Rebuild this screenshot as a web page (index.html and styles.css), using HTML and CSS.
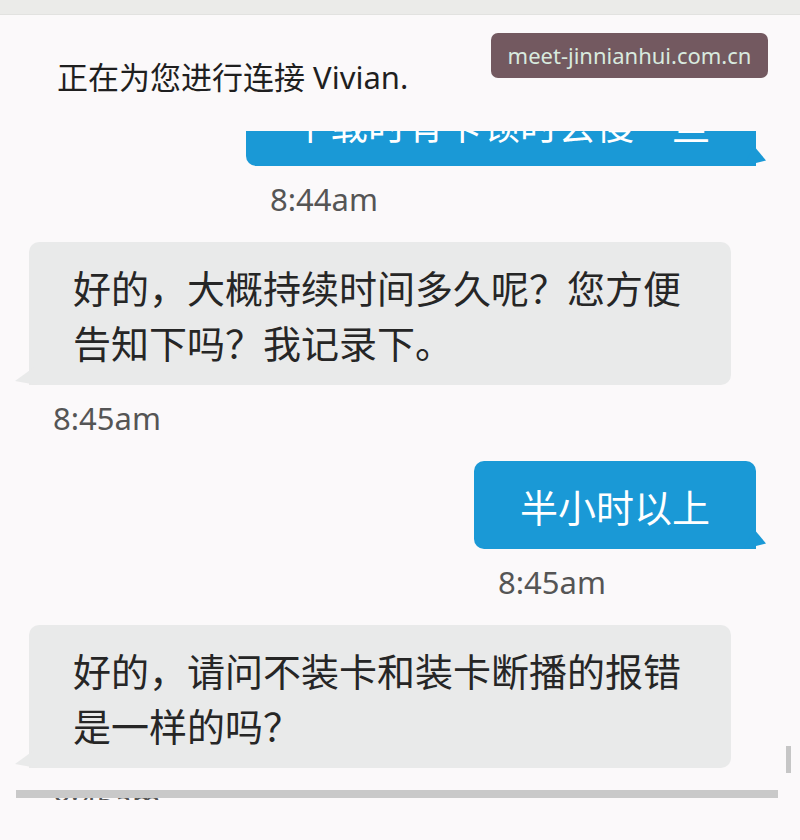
FILE: index.html
```html
<!DOCTYPE html>
<html lang="zh-CN">
  <head>
    <title>在线客服</title>
    <meta charset="UTF-8">
    <link rel="stylesheet" href="styles.css">
  </head>
  <body>
    <div class="topbar"></div>

    <header class="status">
      <p>正在为您进行连接 Vivian.</p>
      <span class="watermark">meet-jinnianhui.com.cn</span>
    </header>

    <main class="chat">
      <div class="messages">
        <div class="msg out first">
          <div class="bubble">下载时有卡顿时会慢一些</div>
          <div class="time">8:44am</div>
        </div>

        <div class="msg in">
          <div class="bubble">好的，大概持续时间多久呢？您方便告知下吗？我记录下。</div>
          <div class="time">8:45am</div>
        </div>

        <div class="msg out">
          <div class="bubble">半小时以上</div>
          <div class="time">8:45am</div>
        </div>

        <div class="msg in">
          <div class="bubble">好的，请问不装卡和装卡断播的报错是一样的吗？</div>
          <div class="time">8:45am</div>
        </div>
      </div>

      <!-- scrollbars drawn over the list -->
      <div class="vscroll"></div>
      <div class="hscroll"></div>
    </main>
  </body>
</html>
```

FILE: styles.css
```css
/* General styles */

html {
  font-family: "Noto Sans", "Noto Sans CJK SC", sans-serif;
  font-size: 16px;
}

body {
  margin: 0;
  background-color: #fbf9fa;
  color: #222;
}

.topbar {
  height: 14px;
  background-color: #ebebe9;
  border-bottom: 1px solid #e2e2e0;
}

/* Connection status line */

.status {
  position: relative;
  height: 116px;
}

.status p {
  margin: 0;
  padding: 42px 0 0 57px;
  font-size: 31px;
  line-height: 40px;
  color: #1f1f1f;
}

.watermark {
  position: absolute;
  top: 18px;
  left: 491px;
  width: 277px;
  height: 45px;
  border-radius: 7px;
  background-color: #735960;
  color: #d8eadf;
  font-family: "Noto Sans", sans-serif;
  font-size: 22px;
  line-height: 45px;
  text-align: center;
}

/* Message list */

.chat {
  position: relative;
  height: 669px;
  overflow: hidden;
}

.messages {
  display: flex;
  flex-direction: column;
}

.msg {
  display: flex;
  flex-direction: column;
  align-items: flex-start;
}

.msg.out {
  align-self: flex-end;
  margin-right: 44px;
}

.msg.in {
  align-self: flex-start;
  margin-left: 29px;
}

.msg.first {
  margin-top: -53px;
}

.bubble {
  position: relative;
  box-sizing: border-box;
  max-width: 702px;
  padding: 17px 44px 16px 44px;
  font-family: "Noto Sans CJK SC", sans-serif;
  font-size: 38px;
  line-height: 55px;
}

.msg.out .bubble {
  padding-left: 46px;
  padding-right: 46px;
  border-radius: 10px 10px 0 10px;
  background-color: #1a99d6;
  color: #fff;
}

.msg.in .bubble {
  border-radius: 10px 10px 10px 0;
  background-color: #e9eaea;
  color: #262626;
}

/* bubble tails */
.bubble::after {
  content: "";
  position: absolute;
  bottom: 0;
  width: 22px;
  height: 20px;
  background-color: inherit;
}

.msg.out .bubble::after {
  right: -10px;
  clip-path: polygon(45% 0, 100% 72%, 0 100%);
}

.msg.in .bubble::after {
  left: -14px;
  clip-path: polygon(100% 0, 0 80%, 100% 100%);
}

.time {
  margin: 13px 0 23px 24px;
  font-family: "Noto Sans", sans-serif;
  font-size: 31px;
  line-height: 40px;
  color: #555;
}

/* Scrollbars */

.vscroll {
  position: absolute;
  top: 615px;
  left: 786px;
  width: 5px;
  height: 27px;
  background-color: #c6c6c6;
}

.hscroll {
  position: absolute;
  top: 659px;
  left: 16px;
  width: 762px;
  height: 8px;
  background-color: #c9c9c9;
}
```
